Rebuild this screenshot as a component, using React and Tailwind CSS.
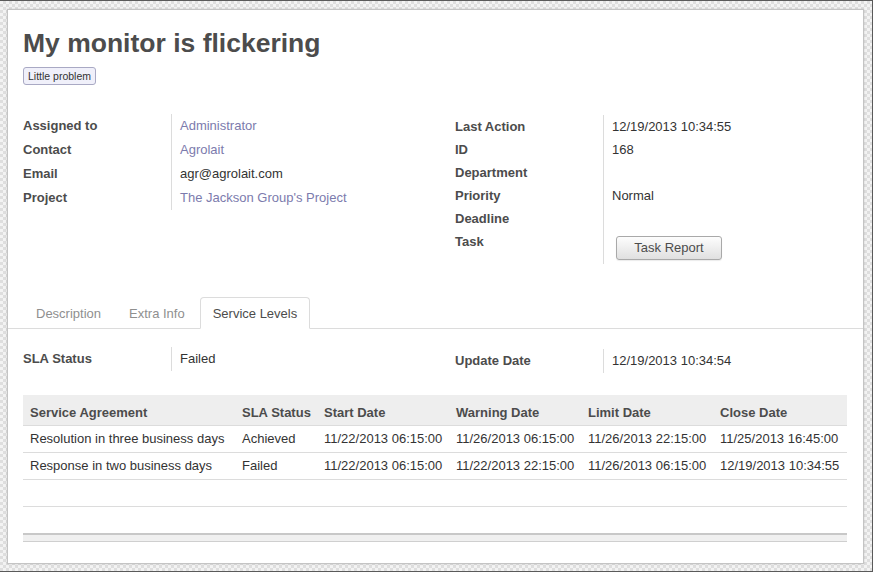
import React from "react";

const leftFields = [
  { label: "Assigned to", value: "Administrator", link: true },
  { label: "Contact", value: "Agrolait", link: true },
  { label: "Email", value: "agr@agrolait.com" },
  { label: "Project", value: "The Jackson Group's Project", link: true },
];

const rightFields = [
  { label: "Last Action", value: "12/19/2013 10:34:55" },
  { label: "ID", value: "168" },
  { label: "Department", value: "" },
  { label: "Priority", value: "Normal" },
  { label: "Deadline", value: "" },
];

const slaRows = [
  {
    name: "Resolution in three business days",
    status: "Achieved",
    start: "11/22/2013 06:15:00",
    warning: "11/26/2013 06:15:00",
    limit: "11/26/2013 22:15:00",
    close: "11/25/2013 16:45:00",
  },
  {
    name: "Response in two business days",
    status: "Failed",
    start: "11/22/2013 06:15:00",
    warning: "11/22/2013 22:15:00",
    limit: "11/26/2013 06:15:00",
    close: "12/19/2013 10:34:55",
  },
];

const cols = ["w-[212px]", "w-[82px]", "w-[132px]", "w-[132px]", "w-[132px]", "w-[134px]"];
const heads = ["Service Agreement", "SLA Status", "Start Date", "Warning Date", "Limit Date", "Close Date"];

function Field({ label, value, link, rowH }) {
  return (
    <div className={`flex ${rowH}`}>
      <div className="w-[148px] shrink-0 font-bold text-[#4c4c4c]">{label}</div>
      <div
        className={`flex-1 border-l border-[#dcdcdc] pl-[8px] ${
          link ? "text-[#7c7bad]" : "text-[#333]"
        }`}
      >
        {value}
      </div>
    </div>
  );
}

function Tab({ label, active }) {
  return (
    <div
      className={`mr-[2px] h-[32px] px-[12px] leading-[31px] border rounded-t-[4px] ${
        active
          ? "border-[#dcdcdc] border-b-white bg-white text-[#4c4c4c]"
          : "border-transparent text-[#8f8f8f]"
      }`}
    >
      {label}
    </div>
  );
}

export default function App() {
  return (
    <div
      className="w-[873px] h-[572px] border-t border-r border-b border-[#5a5a5a] pt-[8px] pl-[7px] pr-[8px] pb-[7px] bg-[repeating-conic-gradient(#dedede_0%_25%,#f3f3f3_0%_50%)] bg-[length:6px_6px] text-[13px] text-[#333]"
      style={{ fontFamily: '"Liberation Sans", Arial, sans-serif' }}
    >
      <div className="h-full bg-white border border-[#c4c4c4] shadow-[0_0_2px_rgba(0,0,0,0.15)] pt-[18px] pl-[15px] pr-[15px]">
        <h1 className="text-[26.5px] leading-[30px] font-bold text-[#4c4c4c]">My monitor is flickering</h1>
        <div className="mt-[9px] flex">
          <span className="h-[18px] px-[4px] text-[10.5px] leading-[16px] border border-[#a9a9c4] rounded-[3px] bg-[#f0f0fa] text-[#333]">
            Little problem
          </span>
        </div>

        <div className="mt-[29px] flex items-start leading-[24px]">
          <div className="w-[432px] shrink-0">
            {leftFields.map((f) => (
              <Field key={f.label} {...f} rowH="h-[24px]" />
            ))}
          </div>
          <div className="flex-1 mt-[1px] leading-[23px]">
            {rightFields.map((f) => (
              <Field key={f.label} {...f} rowH="h-[23px]" />
            ))}
            <div className="flex h-[34px]">
              <div className="w-[148px] shrink-0 font-bold text-[#4c4c4c]">Task</div>
              <div className="flex-1 border-l border-[#dcdcdc] pl-[12px] pt-[6px]">
                <button className="w-[106px] h-[24px] leading-[22px] border border-[#a9a9a9] rounded-[3px] bg-gradient-to-b from-[#fdfdfd] to-[#e0e0e0] text-[13px] text-[#4c4c4c] shadow-[0_1px_1px_rgba(0,0,0,0.08)]">
                  Task Report
                </button>
              </div>
            </div>
          </div>
        </div>

        <div className="-mx-[15px] mt-[33px] pl-[15px] flex items-end border-b border-[#dcdcdc] h-[32px]">
          <div className="flex -mb-px">
            <Tab label="Description" />
            <Tab label="Extra Info" />
            <Tab label="Service Levels" active />
          </div>
        </div>

        <div className="mt-[18px] flex items-start leading-[24px]">
          <div className="w-[432px] shrink-0">
            <Field label="SLA Status" value="Failed" rowH="h-[24px]" />
          </div>
          <div className="flex-1 mt-[2px]">
            <Field label="Update Date" value="12/19/2013 10:34:54" rowH="h-[24px]" />
          </div>
        </div>

        <table className="mt-[22px] w-[824px] table-fixed border-collapse">
          <thead>
            <tr className="h-[30px] bg-[#eeeeee] border-b border-[#dcdcdc]">
              {heads.map((h, i) => (
                <th
                  key={h}
                  className={`${cols[i]} text-left font-bold text-[#4c4c4c] pl-[7px] pt-[8px] pb-[2px] leading-[20px] align-top`}
                >
                  {h}
                </th>
              ))}
            </tr>
          </thead>
          <tbody>
            {slaRows.map((r) => (
              <tr key={r.name} className="h-[27px] border-b border-[#dcdcdc]">
                {[r.name, r.status, r.start, r.warning, r.limit, r.close].map((v, i) => (
                  <td key={i} className="pl-[7px] leading-[26px] whitespace-nowrap">
                    {v}
                  </td>
                ))}
              </tr>
            ))}
            <tr className="h-[27px] border-b border-[#dcdcdc]">
              <td colSpan={6}></td>
            </tr>
            <tr className="h-[27px]">
              <td colSpan={6}></td>
            </tr>
          </tbody>
          <tfoot>
            <tr className="h-[8px] bg-[#f0f0f0] border-t-2 border-t-[#c8c8c8] border-b border-b-[#cfcfcf]">
              <td colSpan={6}></td>
            </tr>
          </tfoot>
        </table>
      </div>
    </div>
  );
}
